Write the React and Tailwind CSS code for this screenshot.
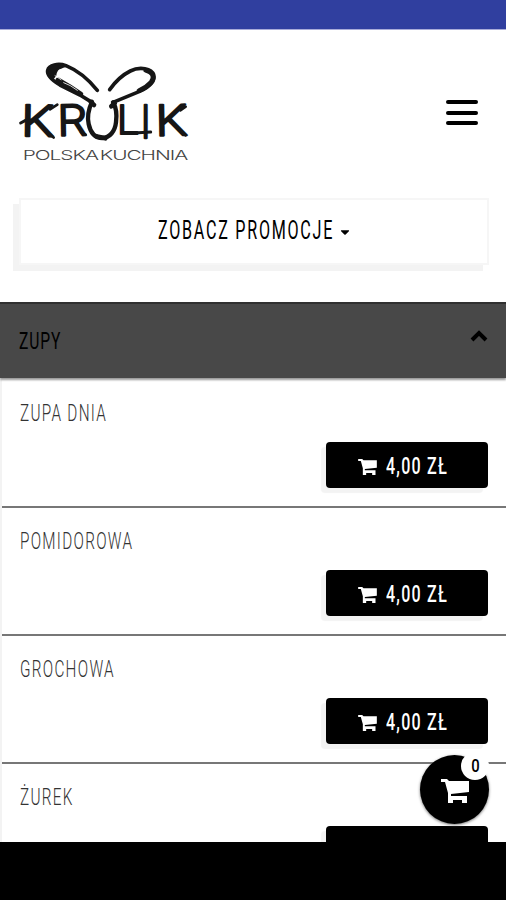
import clsx from 'clsx';
import { FaCaretDown } from 'react-icons/fa';

const items = [
  { id: 1, name: 'ZUPA DNIA', price: '4,00 ZŁ' },
  { id: 2, name: 'POMIDOROWA', price: '4,00 ZŁ' },
  { id: 3, name: 'GROCHOWA', price: '4,00 ZŁ' },
  { id: 4, name: 'ŻUREK' },
];

// x, y: baseline start, sx, sy: stretch of each brush letter
const letters = [
  { char: 'K', x: 64, y: 288, sx: 1.55, sy: 1.32, r: 1 },
  { char: 'R', x: 174, y: 287, sx: 1.4, sy: 1.3, r: -1 },
  { char: 'L', x: 352, y: 283, sx: 1.2, sy: 1.2, r: 0 },
  { char: 'I', x: 422, y: 294, sx: 1.1, sy: 1.38, r: 0 },
  { char: 'K', x: 468, y: 287, sx: 1.5, sy: 1.3, r: -1 },
];

function CartIcon({ className }) {
  return (
    <svg viewBox="0 0 28 24" className={className} fill="currentColor">
      <path d="M0 0H6L8 2H28V13L10 15V17H26V24H21V21H12V24H7V14L4 3H0Z" />
    </svg>
  );
}

function Logo() {
  return (
    <svg viewBox="54 60 516 312" className="h-[104px] w-[172px]" fill="none">
      <g stroke="#161616" strokeLinecap="round" strokeLinejoin="round">
        <path
          d="M292 151C266 119 235 92 198 77C174 69 147 75 143 91C140 108 160 123 180 135L240 165L276 187"
          strokeWidth="11"
        />
        <path
          d="M143 91C148 75 176 70 198 77L184 83C174 83 168 92 166 106L158 116C145 109 141 101 143 91Z"
          fill="#161616"
          strokeWidth="6"
        />
        <path d="M174 120L207 139L242 162" strokeWidth="15" />
        <path d="M165 107L183 119M191 128L211 137L232 151" stroke="#fff" strokeWidth="2.5" />
        <path
          d="M329 149C345 126 365 106 391 93C420 78 455 86 461 104C467 124 444 142 419 154L339 187"
          strokeWidth="11"
        />
        <path d="M437 91C458 97 466 111 453 127C443 138 430 147 417 152" strokeWidth="14" />
        <path
          d="M276 185C266 207 260 226 266 252C272 281 288 294 307 294C329 293 345 275 348 247C351 224 348 201 339 187"
          strokeWidth="13"
        />
        <path d="M344 190L334 199M273 187L282 195M288 289L316 295" strokeWidth="14" />
        <path d="M62 249L82 238M402 279L452 276" strokeWidth="9" />
        <path d="M150 208L172 194M151 283L161 293M541 211L557 200M544 277L557 286M243 277L257 284" strokeWidth="8" />
      </g>
      <g
        fill="#161616"
        stroke="#161616"
        strokeWidth="5"
        strokeLinejoin="round"
        className="font-['Roboto'] text-[100px] font-light"
      >
        {letters.map((l, i) => (
          <text
            key={i}
            transform={`translate(${l.x} ${l.y}) rotate(${l.r}) scale(${l.sx} ${l.sy})`}
          >
            {l.char}
          </text>
        ))}
      </g>
      <text
        x="68"
        y="361"
        textLength="494"
        lengthAdjust="spacingAndGlyphs"
        fill="#444"
        className="font-['Inter'] text-[41px] font-light tracking-[-2px] [word-spacing:-6px]"
      >
        POLSKA KUCHNIA
      </text>
    </svg>
  );
}

function Narrow({ className, children }) {
  return (
    <span
      className={clsx(
        "inline-block origin-left font-['Roboto',sans-serif] whitespace-nowrap",
        className,
      )}
    >
      {children}
    </span>
  );
}

function MenuItem({ item }) {
  return (
    <li className="flex h-32 shrink-0 flex-col border-b-2 border-[#777] pl-[18px]">
      <div className="mt-[17px] h-8">
        <Narrow className="scale-x-[0.65] text-[23.5px] leading-8 font-light tracking-[2px] text-[#333]">
          {item.name}
        </Narrow>
      </div>
      <button className="mt-[13px] mr-[18px] flex h-[46px] w-[162px] items-center self-end rounded-[4px] bg-black pl-8 text-white shadow-[-5px_5px_1px_#f3f3f3]">
        {item.price && (
          <>
            <CartIcon className="mt-1 h-[16px] w-[19px] shrink-0" />
            <Narrow className="mt-0.5 ml-[9px] w-0 scale-x-[0.67] text-[24px] font-medium tracking-[1.8px]">
              {item.price}
            </Narrow>
          </>
        )}
      </button>
    </li>
  );
}

export default function App() {
  return (
    <div className="relative flex h-[900px] w-[506px] flex-col overflow-hidden bg-white">
      <div className="h-[30px] shrink-0 border-b border-[#a9acd9] bg-[#303f9f]" />

      <header className="flex h-[168px] shrink-0 items-start justify-between pr-7 pl-[18px]">
        <div className="mt-[30px]">
          <Logo />
        </div>
        <button className="mt-[70px] flex w-8 flex-col gap-[6.5px]">
          <span className="h-1 rounded-sm bg-black" />
          <span className="h-1 rounded-sm bg-black" />
          <span className="h-1 rounded-sm bg-black" />
        </button>
      </header>

      <button className="mr-[17px] ml-[19px] flex h-[67px] shrink-0 items-center border-2 border-[#f6f6f6] bg-white pl-[137px] shadow-[-6px_6px_0_#f3f3f3]">
        <Narrow className="-mt-0.5 w-[180px] scale-x-[0.62] text-[26px] tracking-[2.8px] text-black">
          ZOBACZ PROMOCJE
        </Narrow>
        <FaCaretDown className="size-[14px]" />
      </button>

      <section className="mt-[37px] flex h-[540px] shrink-0 flex-col overflow-hidden">
        <div className="z-10 flex h-[76px] shrink-0 items-center justify-between border-t-2 border-[#303030] bg-[#484848] pr-[18px] pl-[19px] shadow-[0_2px_2px_#999]">
          <Narrow className="scale-x-[0.65] text-[24px] tracking-[1.4px] text-black">
            ZUPY
          </Narrow>
          <svg viewBox="0 0 18 12" className="mb-2.5 h-3 w-[18px]" fill="none">
            <path d="M2 10L9 3L16 10" stroke="#000" strokeWidth="4" />
          </svg>
        </div>
        <ul className="flex flex-col border-l-2 border-[#f3f3f3] pt-[2px]">
          {items.map((item) => (
            <MenuItem key={item.id} item={item} />
          ))}
        </ul>
      </section>

      <div className="h-[58px] shrink-0 bg-black" />

      <button className="absolute top-[755px] left-[420px] flex size-[69px] items-center justify-center rounded-full bg-black text-white shadow-[0_1px_3px_#777]">
        <CartIcon className="mt-0.5 h-6 w-7" />
        <span className="absolute -top-[3px] left-[41px] flex size-[28px] items-center justify-center rounded-full bg-white text-black">
          <span className="inline-block scale-x-[0.78] font-['Roboto'] text-[19px] font-medium">
            0
          </span>
        </span>
      </button>
    </div>
  );
}
